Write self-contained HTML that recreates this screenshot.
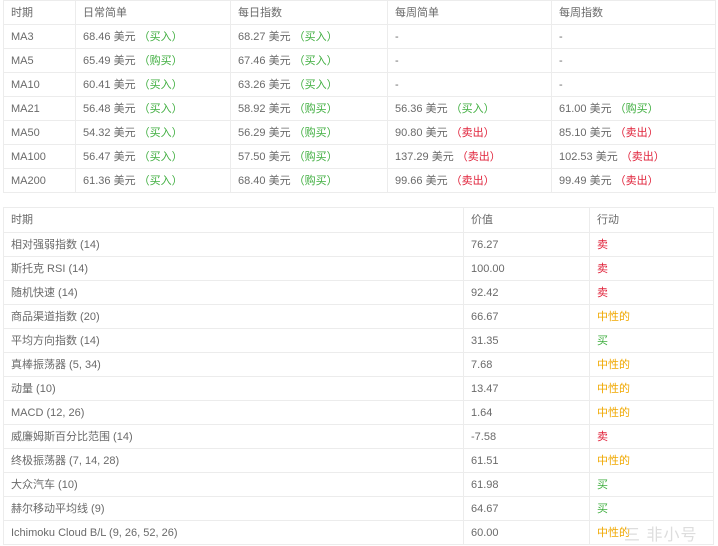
<!DOCTYPE html>
<html><head><meta charset="utf-8"><style>
*{margin:0;padding:0;box-sizing:border-box}
body{width:718px;height:546px;background:#fff;font-family:"Liberation Sans","Noto Sans CJK SC",sans-serif;font-size:11px;color:#6a6a6a;position:relative;overflow:hidden}
table{position:absolute;border-collapse:collapse;table-layout:fixed}
td{border:1px solid #ececec;padding:0 0 0 7px;height:24px;line-height:22px;white-space:nowrap;overflow:hidden;vertical-align:middle}
td span{display:inline-block;line-height:22px;vertical-align:top}
.g{color:#3fae3f}.r{color:#e0223a}.y{color:#f0a800}
#t1{left:3px;top:0;width:713px}
#t2{left:3px;top:207px;width:711px}
#t2 tr:first-child td{height:25px}
</style></head><body>
<table id="t1">
<colgroup><col style="width:72px"><col style="width:155px"><col style="width:157px"><col style="width:164px"><col></colgroup>
<tr><td>时期</td><td>日常简单</td><td>每日指数</td><td>每周简单</td><td>每周指数</td></tr>
<tr><td>MA3</td><td>68.46 美元 <span class="g">（买入）</span></td><td>68.27 美元 <span class="g">（买入）</span></td><td>-</td><td>-</td></tr>
<tr><td>MA5</td><td>65.49 美元 <span class="g">（购买）</span></td><td>67.46 美元 <span class="g">（买入）</span></td><td>-</td><td>-</td></tr>
<tr><td>MA10</td><td>60.41 美元 <span class="g">（买入）</span></td><td>63.26 美元 <span class="g">（买入）</span></td><td>-</td><td>-</td></tr>
<tr><td>MA21</td><td>56.48 美元 <span class="g">（买入）</span></td><td>58.92 美元 <span class="g">（购买）</span></td><td>56.36 美元 <span class="g">（买入）</span></td><td>61.00 美元 <span class="g">（购买）</span></td></tr>
<tr><td>MA50</td><td>54.32 美元 <span class="g">（买入）</span></td><td>56.29 美元 <span class="g">（购买）</span></td><td>90.80 美元 <span class="r">（卖出）</span></td><td>85.10 美元 <span class="r">（卖出）</span></td></tr>
<tr><td>MA100</td><td>56.47 美元 <span class="g">（买入）</span></td><td>57.50 美元 <span class="g">（购买）</span></td><td>137.29 美元 <span class="r">（卖出）</span></td><td>102.53 美元 <span class="r">（卖出）</span></td></tr>
<tr><td>MA200</td><td>61.36 美元 <span class="g">（买入）</span></td><td>68.40 美元 <span class="g">（购买）</span></td><td>99.66 美元 <span class="r">（卖出）</span></td><td>99.49 美元 <span class="r">（卖出）</span></td></tr>
</table>
<table id="t2">
<colgroup><col style="width:460px"><col style="width:126px"><col></colgroup>
<tr><td>时期</td><td>价值</td><td>行动</td></tr>
<tr><td>相对强弱指数 (14)</td><td>76.27</td><td class="r">卖</td></tr>
<tr><td>斯托克 RSI (14)</td><td>100.00</td><td class="r">卖</td></tr>
<tr><td>随机快速 (14)</td><td>92.42</td><td class="r">卖</td></tr>
<tr><td>商品渠道指数 (20)</td><td>66.67</td><td class="y">中性的</td></tr>
<tr><td>平均方向指数 (14)</td><td>31.35</td><td class="g">买</td></tr>
<tr><td>真棒振荡器 (5, 34)</td><td>7.68</td><td class="y">中性的</td></tr>
<tr><td>动量 (10)</td><td>13.47</td><td class="y">中性的</td></tr>
<tr><td>MACD (12, 26)</td><td>1.64</td><td class="y">中性的</td></tr>
<tr><td>威廉姆斯百分比范围 (14)</td><td>-7.58</td><td class="r">卖</td></tr>
<tr><td>终极振荡器 (7, 14, 28)</td><td>61.51</td><td class="y">中性的</td></tr>
<tr><td>大众汽车 (10)</td><td>61.98</td><td class="g">买</td></tr>
<tr><td>赫尔移动平均线 (9)</td><td>64.67</td><td class="g">买</td></tr>
<tr><td>Ichimoku Cloud B/L (9, 26, 52, 26)</td><td>60.00</td><td class="y">中性的</td></tr>
</table>
<div style="position:absolute;left:624px;top:521px;font-size:16px;color:#ddd;letter-spacing:1px">三 非小号</div>
</body></html>
